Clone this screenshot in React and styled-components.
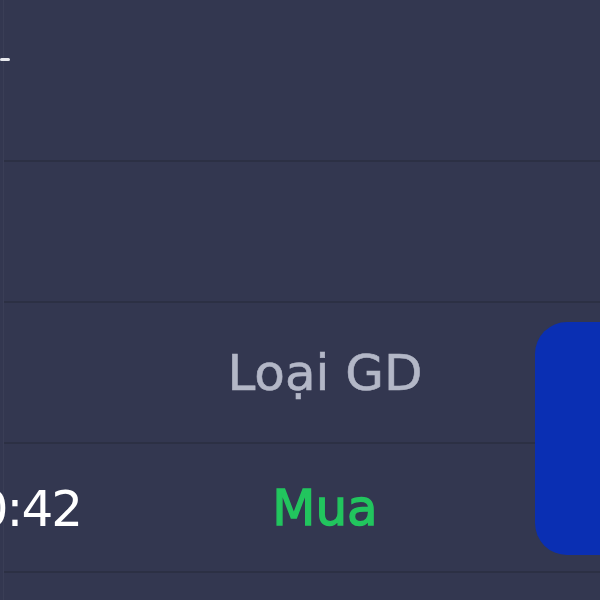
import React from "react";
import styled, { createGlobalStyle } from "styled-components";

const Global = createGlobalStyle`
  html, body {
    margin: 0;
    padding: 0;
    width: 600px;
    height: 600px;
    overflow: hidden;
    background: #333750;
    font-family: "DejaVu Sans", "Noto Sans", sans-serif;
  }
`;

const Page = styled.div`
  position: relative;
  width: 600px;
  height: 600px;
  overflow: hidden;
`;

const Table = styled.div`
  display: flex;
  flex-direction: column;
  margin-left: 3px;
  border-left: 1px solid #3a3e56;
`;

const Row = styled.div`
  display: grid;
  grid-template-columns: 126px 390px 1fr;
  height: ${(p) => p.$h}px;
  border-bottom: 2px solid #2c3044;
  align-items: center;
`;

const TimeCell = styled.div`
  display: flex;
  justify-content: flex-end;
  padding-right: 49px;
  white-space: nowrap;
  color: #ffffff;
  font-size: 50px;
  font-weight: 400;
  letter-spacing: -2px;
  padding-top: 3px;
`;

const CenterCell = styled.div`
  display: flex;
  justify-content: center;
  white-space: nowrap;
  font-size: 50px;
  font-weight: 400;
  color: ${(p) => p.$color};
  -webkit-text-stroke: ${(p) => p.$stroke}px ${(p) => p.$color};
`;

const Dash = styled.div`
  width: 10px;
  height: 3px;
  margin-left: -4px;
  margin-top: -42px;
  border-radius: 2px;
  background: #e8e9ee;
`;

const Fab = styled.div`
  position: absolute;
  left: 535px;
  top: 322px;
  width: 120px;
  height: 233px;
  border-radius: 32px;
  background: #0a2fb3;
`;

export default function App() {
  return (
    <Page>
      <Global />
      <Table>
        <Row $h={160}>
          <Dash />
        </Row>
        <Row $h={139} />
        <Row $h={139}>
          <div />
          <CenterCell $color="#b3b7c7" $stroke={0.6}>
            Loại GD
          </CenterCell>
        </Row>
        <Row $h={127}>
          <TimeCell>10:10:42</TimeCell>
          <CenterCell $color="#22c55e" $stroke={1.4}>
            Mua
          </CenterCell>
        </Row>
        <Row $h={140} />
      </Table>
      <Fab />
    </Page>
  );
}
